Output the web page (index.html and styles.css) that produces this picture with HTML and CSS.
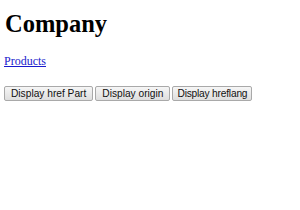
FILE: index.html
```html
<!DOCTYPE html>
<html lang="en">
<head>
    <meta charset="UTF-8">
    <meta name="viewport" content="width=device-width, initial-scale=1.0">
    <title>Company</title>
    <link rel="stylesheet" href="styles.css">
</head>
<body>

<h1>Company</h1>

<p class="links"><a href="#products">Products</a></p>

<div class="actions">
    <button>Display href Part</button>
    <button>Display origin</button>
    <button class="narrow">Display hreflang</button>
</div>

</body>
</html>
```

FILE: styles.css
```css
body {
    font-family: "Liberation Serif", "Times New Roman", serif;
    background-color: #fff;
    color: #000;
    margin: 0;
    padding: 10px 4px 0 4px;
}
h1 {
    font-size: 24.5px;
    line-height: 27px;
    font-weight: bold;
    margin: 0 0 17px 1px;
}
.links {
    font-size: 12px;
    line-height: 14px;
    margin: 0 0 18px 0;
}
.links a {
    color: #1a1acc;
    text-decoration: underline;
}
.actions {
    display: flex;
    gap: 2px;
}
.actions button {
    font-family: "Liberation Sans", Arial, sans-serif;
    font-size: 10.2px;
    line-height: 13px;
    color: #111;
    padding: 0 6px;
    border: 1px solid #a9a9a9;
    border-radius: 2px;
    background: linear-gradient(#f6f6f6, #dedede);
    cursor: pointer;
}
.actions button.narrow {
    padding: 0 4px;
    letter-spacing: -0.2px;
}
```
